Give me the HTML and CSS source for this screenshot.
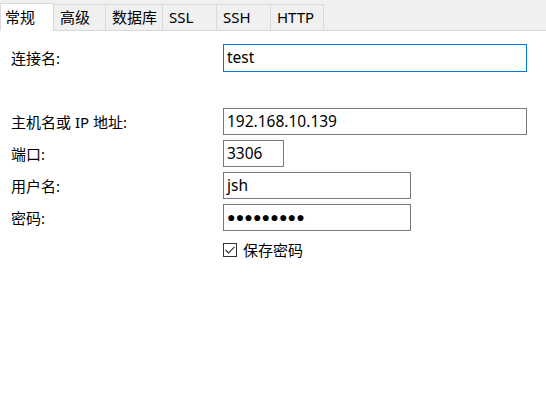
FILE: index.html
```html
<!DOCTYPE html>
<html lang="zh-CN">
<head>
<meta charset="utf-8">
<title>连接</title>
<link rel="stylesheet" href="styles.css">
</head>
<body>
<div class="tabs">
  <div class="tab active t1">常规</div>
  <div class="tab t2">高级</div>
  <div class="tab t3">数据库</div>
  <div class="tab t4">SSL</div>
  <div class="tab t5">SSH</div>
  <div class="tab t6">HTTP</div>
</div>
<div class="form">
  <div class="label">连接名:</div>
  <div class="field focus wide">test</div>
  <div class="spacer"></div>
  <div class="label">主机名或 IP 地址:</div>
  <div class="field wide">192.168.10.139</div>
  <div class="label">端口:</div>
  <div class="field port">3306</div>
  <div class="label">用户名:</div>
  <div class="field mid">jsh</div>
  <div class="label">密码:</div>
  <div class="field mid pw">●●●●●●●●●</div>
  <div class="label"></div>
  <div class="check-row">
    <span class="box"><svg width="12" height="12" viewBox="0 0 12 12"><path d="M1.5 6 L4.5 9 L10.5 2.8" fill="none" stroke="#333" stroke-width="1.1"/></svg></span>
    <span>保存密码</span>
  </div>
</div>
</body>
</html>
```
FILE: styles.css
```css
html, body {
  margin: 0;
  padding: 0;
  background: #fff;
}
body {
  width: 546px;
  height: 406px;
  overflow: hidden;
  font-family: "Noto Sans", "Noto Sans CJK SC", sans-serif;
  font-size: 15px;
  color: #000;
}
.tabs {
  display: flex;
  align-items: flex-end;
  height: 31px;
  background: #f0f0f0;
  position: relative;
}
.tabs::after {
  content: "";
  position: absolute;
  left: 0;
  right: 0;
  top: 30px;
  height: 1px;
  background: #d9d9d9;
}
.tab {
  box-sizing: border-box;
  height: 26px;
  margin-bottom: 1px;
  border: 1px solid #d9d9d9;
  border-left: none;
  border-bottom: none;
  background: #f0f0f0;
  padding-left: 6px;
  line-height: 24px;
  white-space: nowrap;
}
.tab.active {
  height: 28px;
  margin-bottom: 0;
  background: #fff;
  border-left: 1px solid #d9d9d9;
  padding-left: 4px;
  line-height: 26px;
  position: relative;
  z-index: 1;
}
.t1 { width: 54px; }
.t2 { width: 52px; }
.t3 { width: 57px; }
.t4 { width: 54px; }
.t5 { width: 54px; }
.t6 { width: 53px; }
.form {
  display: grid;
  grid-template-columns: 212px 1fr;
  grid-auto-rows: 27px;
  row-gap: 5px;
  padding: 13px 19px 0 11px;
}
.label {
  display: flex;
  align-items: center;
  white-space: nowrap;
}
.spacer {
  grid-column: 1 / 3;
}
.field {
  box-sizing: border-box;
  height: 27px;
  border: 1px solid #7a7a7a;
  padding-left: 3px;
  line-height: 25px;
  font-size: 15.5px;
  white-space: nowrap;
}
.field.focus {
  border-color: #0078d7;
  height: 28px;
}
.wide { width: 304px; }
.mid { width: 188px; }
.port { width: 61px; }
.pw {
  font-family: "Liberation Sans", sans-serif;
  font-size: 14px;
  letter-spacing: 0.2px;
}
.check-row {
  display: flex;
  align-items: center;
  gap: 6px;
}
.box {
  box-sizing: border-box;
  width: 14px;
  height: 14px;
  border: 1px solid #333;
  display: flex;
  align-items: center;
  justify-content: center;
}
```
